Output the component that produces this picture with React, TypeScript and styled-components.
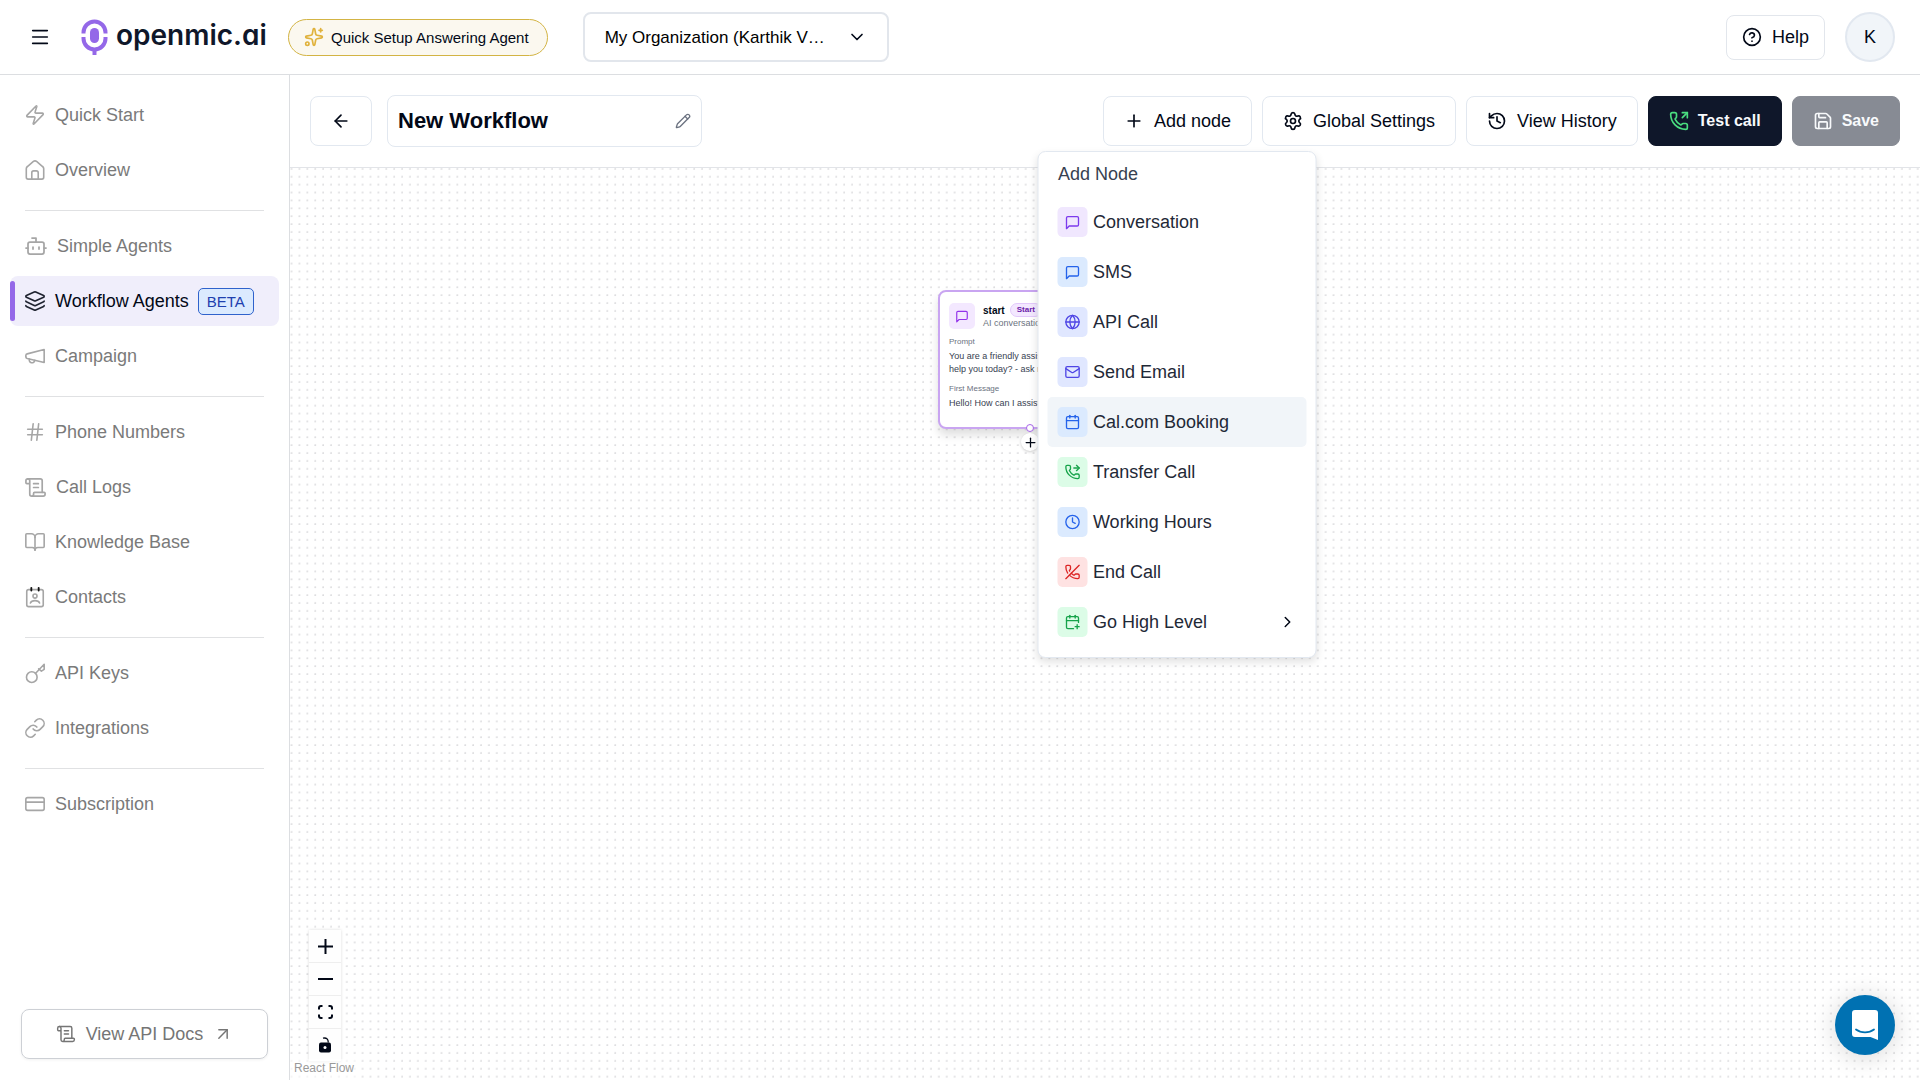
import React from "react";
import styled, { createGlobalStyle } from "styled-components";
import {
  ArrowLeft,
  ArrowUpRight,
  BookOpen,
  Bot,
  Calendar,
  CalendarPlus,
  ChevronDown,
  ChevronRight,
  CircleHelp,
  Clock,
  CreditCard,
  Globe,
  Hash,
  History,
  Layers,
  Link,
  Mail,
  Menu as MenuIcon,
  Pencil,
  PhoneForwarded,
  PhoneOff,
  PhoneOutgoing,
  Plus,
  Save,
  ScrollText,
  Settings,
  Sparkles,
  Zap,
} from "lucide-react";

const GlobalStyle = createGlobalStyle`
  *, *::before, *::after { box-sizing: border-box; }
  body { margin: 0; background: #fff; }
  body, button, input, select {
    font-family: "Liberation Sans", Arial, sans-serif;
    color: #020817;
  }
  button { cursor: pointer; }
  a { text-decoration: none; color: inherit; }
  svg { flex-shrink: 0; }
`;

const Page = styled.div`
  display: flex;
  flex-direction: column;
  height: 100vh;
  overflow: hidden;
`;

/* ---------- top header ---------- */

const Header = styled.header`
  display: flex;
  align-items: center;
  height: 75px;
  padding: 0 25px 0 29px;
  border-bottom: 1px solid #dcdee1;
  flex-shrink: 0;
`;

const IconButton = styled.button`
  display: flex;
  padding: 0;
  border: 0;
  background: none;
`;

const Brand = styled.a`
  display: flex;
  align-items: center;
  gap: 8px;
  margin-left: 30px;
  width: 187px;
`;

const BrandName = styled.span`
  font-family: Inter, "Liberation Sans", sans-serif;
  font-feature-settings: "cv11";
  font-size: 28px;
  line-height: 36px;
  font-weight: 600;
  color: #0f172a;
  padding-bottom: 4px;
`;

const SetupButton = styled.button`
  display: flex;
  align-items: center;
  gap: 7px;
  height: 37px;
  margin-left: 20px;
  padding: 0 18px 0 15px;
  border: 1px solid #d3b444;
  border-radius: 19px;
  background: #fbf8ef;
  font-size: 15px;
  white-space: nowrap;
`;

const OrgPicker = styled.div`
  display: flex;
  align-items: center;
  position: relative;
  width: 306px;
  height: 50px;
  margin-left: 35px;
  svg {
    position: absolute;
    right: 22px;
    pointer-events: none;
  }
`;

const OrgSelect = styled.select`
  appearance: none;
  width: 100%;
  height: 100%;
  padding: 0 54px 0 20px;
  border: 2px solid #e2e6ec;
  border-radius: 8px;
  background: #fff;
  font-size: 17px;
  color: #000;
  text-overflow: ellipsis;
`;

const HeaderEnd = styled.div`
  display: flex;
  align-items: center;
  gap: 20px;
  margin-left: auto;
`;

const HelpButton = styled.button`
  display: flex;
  align-items: center;
  gap: 10px;
  height: 45px;
  padding: 0 15px;
  border: 1px solid #e2e6ec;
  border-radius: 8px;
  background: #fff;
  font-size: 18px;
`;

const Avatar = styled.button`
  width: 50px;
  height: 50px;
  padding: 0;
  border: 2px solid #e2e8f0;
  border-radius: 50%;
  background: #f1f5f9;
  font-size: 18px;
`;

/* ---------- sidebar ---------- */

const Body = styled.div`
  display: flex;
  flex: 1;
  min-height: 0;
`;

const Sidebar = styled.aside`
  display: flex;
  flex-direction: column;
  width: 290px;
  padding: 15px 10px 21px;
  border-right: 1px solid #dcdee1;
  flex-shrink: 0;
`;

const NavGroup = styled.nav`
  display: flex;
  flex-direction: column;
  gap: 5px;
`;

const Divider = styled.hr`
  width: 239px;
  height: 1px;
  margin: 15px 0 10px 15px;
  border: 0;
  background: #e0e1e3;
`;

const NavItem = styled.a<{ $active?: boolean }>`
  display: flex;
  align-items: center;
  gap: 9px;
  position: relative;
  height: 50px;
  padding-left: 14px;
  border-radius: 8px;
  font-size: 18px;
  color: ${(p) => (p.$active ? "#020817" : "#7a7a7a")};
  background: ${(p) => (p.$active ? "#f0eefb" : "transparent")};
  svg {
    color: ${(p) => (p.$active ? "#1f2330" : "#a6a6a6")};
  }
  &::before {
    content: "";
    display: ${(p) => (p.$active ? "block" : "none")};
    position: absolute;
    left: 0;
    top: 5px;
    bottom: 5px;
    width: 5px;
    border-radius: 3px;
    background: #9468e8;
  }
`;

const BetaTag = styled.span`
  padding: 0 8px;
  border: 1px solid #2f62cc;
  border-radius: 5px;
  background: #dbeafe;
  color: #1e40af;
  font-size: 15px;
  line-height: 25px;
`;

const DocsLink = styled.a`
  display: flex;
  align-items: center;
  justify-content: center;
  gap: 10px;
  height: 50px;
  margin: auto 11px 0;
  border: 1px solid #cdd0d5;
  border-radius: 8px;
  box-shadow: 0 1px 3px rgba(0, 0, 0, 0.06);
  color: #757575;
  font-size: 18px;
`;

/* ---------- workflow toolbar ---------- */

const Main = styled.main`
  display: flex;
  flex-direction: column;
  flex: 1;
  min-width: 0;
`;

const Toolbar = styled.div`
  display: flex;
  align-items: center;
  gap: 10px;
  height: 93px;
  padding: 0 20px;
  border-bottom: 1px solid #e2e4e8;
  flex-shrink: 0;
`;

const toolTones = { dark: "#0f172a", muted: "#878b94" };

const ToolButton = styled.button<{ $tone?: keyof typeof toolTones }>`
  display: flex;
  align-items: center;
  justify-content: center;
  gap: ${(p) => (p.$tone ? 9 : 10)}px;
  height: 50px;
  padding: 0 20px;
  border: 1px solid ${(p) => (p.$tone ? toolTones[p.$tone] : "#e2e8f0")};
  border-radius: 8px;
  background: ${(p) => (p.$tone ? toolTones[p.$tone] : "#fff")};
  color: ${(p) => (p.$tone ? "#f8fafc" : "#020817")};
  font-size: ${(p) => (p.$tone ? 16 : 18)}px;
  font-weight: ${(p) => (p.$tone ? 700 : 400)};
  white-space: nowrap;
`;

const BackButton = styled(ToolButton)`
  width: 62px;
  padding: 0;
`;

const TitleField = styled.label`
  display: flex;
  align-items: center;
  width: 315px;
  height: 52px;
  margin: 0 auto 0 5px;
  padding: 0 10px;
  border: 1px solid #e2e8f0;
  border-radius: 8px;
  color: #6b7280;
`;

const TitleInput = styled.input`
  flex: 1;
  min-width: 0;
  padding: 0;
  border: 0;
  outline: 0;
  background: none;
  font-size: 22px;
  font-weight: 700;
`;

const MenuAnchor = styled.div`
  position: relative;
`;

const NodeMenu = styled.div`
  position: absolute;
  z-index: 5;
  top: 100%;
  left: 50%;
  width: 279px;
  margin-top: 5px;
  padding: 0 9px 10px;
  transform: translateX(-50%);
  border: 1px solid #e2e8f0;
  border-radius: 8px;
  background: #fff;
  box-shadow: 0 4px 8px rgba(0, 0, 0, 0.12);
`;

const MenuTitle = styled.div`
  padding: 10px 10px 11px;
  color: #374151;
  font-size: 18px;
  line-height: 24px;
`;

const MenuItem = styled.button<{ $highlighted?: boolean }>`
  display: flex;
  align-items: center;
  gap: 5px;
  width: 100%;
  height: 50px;
  padding: 0 10px;
  border: 0;
  border-radius: 5px;
  background: ${(p) => (p.$highlighted ? "#f1f5f9" : "transparent")};
  color: #1f2937;
  font-size: 18px;
  text-align: left;
  & > svg {
    margin-left: auto;
    color: #020817;
  }
`;

const Tile = styled.span<{ $bg: string; $fg: string; $size: number }>`
  display: flex;
  align-items: center;
  justify-content: center;
  width: ${(p) => p.$size}px;
  height: ${(p) => p.$size}px;
  border-radius: 5px;
  background: ${(p) => p.$bg};
  color: ${(p) => p.$fg};
  flex-shrink: 0;
`;

/* ---------- canvas ---------- */

const Canvas = styled.section`
  position: relative;
  flex: 1;
  min-height: 0;
  overflow: hidden;
`;

const DotGrid = styled.svg`
  display: block;
  width: 100%;
  height: 100%;
`;

const FlowNode = styled.article`
  position: absolute;
  left: 648px;
  top: 122px;
  width: 184px;
  height: 139px;
  padding: 11px 9px;
  border: 2px solid #c9a5f1;
  border-radius: 8px;
  background: #fff;
  box-shadow: 0 6px 10px rgba(0, 0, 0, 0.13);
  font-size: 9px;
  line-height: 13px;
`;

const NodeHead = styled.div`
  display: flex;
  gap: 8px;
`;

const NodeName = styled.div`
  display: flex;
  align-items: center;
  gap: 5px;
  height: 14px;
  font-size: 10px;
  font-weight: 700;
`;

const StartTag = styled.span`
  padding: 0 6px;
  border: 1px solid #e3c9fb;
  border-radius: 7px;
  background: #f3e8ff;
  color: #6b21a8;
  font-size: 8px;
  line-height: 12px;
`;

const NodeKind = styled.div`
  color: #6b7280;
  line-height: 12px;
  white-space: nowrap;
`;

const NodeLabel = styled.div`
  margin-top: 7px;
  margin-bottom: 3px;
  color: #6b7280;
  font-size: 8px;
  line-height: 11px;
`;

const NodeText = styled.div`
  color: #374151;
`;

const Handle = styled.span`
  position: absolute;
  left: 50%;
  bottom: -5px;
  width: 8px;
  height: 8px;
  margin-left: -4px;
  border: 1px solid #a866ea;
  border-radius: 50%;
  background: #fff;
`;

const AppendButton = styled.button`
  display: flex;
  align-items: center;
  justify-content: center;
  position: absolute;
  left: 50%;
  bottom: -24px;
  width: 18px;
  height: 18px;
  margin-left: -9px;
  padding: 0;
  border: 0;
  border-radius: 50%;
  background: #fff;
  box-shadow: 0 1px 3px rgba(0, 0, 0, 0.2);
`;

const Controls = styled.div`
  position: absolute;
  left: 19px;
  bottom: 18px;
  display: flex;
  flex-direction: column;
  width: 32px;
  box-shadow: 0 0 3px rgba(0, 0, 0, 0.14);
`;

const ControlButton = styled.button`
  display: flex;
  align-items: center;
  justify-content: center;
  height: 33px;
  padding: 0;
  border: 0;
  border-bottom: 1px solid #eee;
  background: #fefefe;
`;

const Attribution = styled.a`
  position: absolute;
  left: 0;
  bottom: 0;
  padding: 2px 4px 5px;
  background: rgba(255, 255, 255, 0.6);
  color: #999;
  font-size: 12px;
  line-height: 14px;
`;

const ChatButton = styled.button`
  display: flex;
  align-items: center;
  justify-content: center;
  position: absolute;
  right: 25px;
  bottom: 25px;
  width: 60px;
  height: 60px;
  padding: 0;
  border: 0;
  border-radius: 50%;
  background: #0071b2;
  box-shadow: 0 2px 24px rgba(0, 0, 0, 0.16);
`;

/* ---------- drawings ---------- */

type IconProps = { size?: number; strokeWidth?: number };

const LineIcon = ({ size = 22, strokeWidth = 2, children }: IconProps & { children: React.ReactNode }) => (
  <svg width={size} height={size} viewBox="0 0 24 24" fill="none" stroke="currentColor" strokeWidth={strokeWidth} strokeLinecap="round" strokeLinejoin="round">
    {children}
  </svg>
);

const Message = (p: IconProps) => (
  <LineIcon {...p}>
    <path d="M21 15a2 2 0 0 1-2 2H7l-4 4V5a2 2 0 0 1 2-2h14a2 2 0 0 1 2 2z" transform="translate(0 1)" />
  </LineIcon>
);

const House = (p: IconProps) => (
  <LineIcon {...p}>
    <path d="M2.5 10.5a3 3 0 0 1 1.2-2.3l6.6-5.5a2.7 2.7 0 0 1 3.4 0l6.6 5.5a3 3 0 0 1 1.2 2.3V20a2 2 0 0 1-2 2h-15a2 2 0 0 1-2-2z" />
    <path d="M8.5 22v-7a2 2 0 0 1 2-2h3a2 2 0 0 1 2 2v7" />
  </LineIcon>
);

const Horn = (p: IconProps) => (
  <LineIcon {...p}>
    <path d="M22 5v14L3.500 14.800A2 2 0 0 1 2 13v-1.500A2 2 0 0 1 3.500 9.700z" />
    <path d="M11.700 16.800a3 3 0 1 1-5.800-1.400" />
  </LineIcon>
);

const KeyShape = (p: IconProps) => (
  <LineIcon {...p}>
    <circle cx="8.500" cy="16.500" r="5.800" />
    <path d="M12.700 12.300 22 2.500v5.500l-3 2-3-2.500" />
  </LineIcon>
);

const ContactCard = (p: IconProps) => (
  <LineIcon {...p}>
    <rect x="3" y="4" width="18" height="18.500" rx="2" />
    <circle cx="12" cy="11" r="2.200" />
    <path d="M7 18.500c.8-2 2.600-2.500 5-2.500s4.200.5 5 2.500" />
    <path d="M8 2v3M16 2v3" stroke="#111" strokeWidth="2" />
  </LineIcon>
);

const BrandMark = () => (
  <svg width="27" height="36" viewBox="0 0 27 36" fill="none" stroke="#9468e8">
    <path d="M2.500 14.500v-1a11 11 0 0 1 22 0v1" strokeWidth="4" />
    <path d="M2.500 18v1.500a11 11 0 0 0 22 0v-1.500" strokeWidth="4" />
    <path d="M13.500 29v7" strokeWidth="4" />
    <rect x="9" y="9" width="9" height="15" rx="4.500" fill="#9468e8" stroke="none" />
  </svg>
);

const FitView = () => (
  <svg width="15" height="14" viewBox="0 0 15 14" fill="none" stroke="currentColor" strokeWidth="2">
    <path d="M1 4.500V3a2 2 0 0 1 2-2h1.500M10.500 1H12a2 2 0 0 1 2 2v1.500M14 9.500V11a2 2 0 0 1-2 2h-1.500M4.500 13H3a2 2 0 0 1-2-2V9.500" />
  </svg>
);

const Unlocked = () => (
  <svg width="12" height="16" viewBox="0 0 12 16">
    <path d="M4 1.200c3.500-.8 5.300.8 5.300 4.300" fill="none" stroke="currentColor" strokeWidth="1.300" />
    <rect y="5.500" width="12" height="10" rx="2" fill="currentColor" />
    <circle cx="6" cy="10.500" r="1.500" fill="#fff" />
  </svg>
);

const ChatFace = () => (
  <svg width="26" height="30" viewBox="0 0 26 30">
    <path d="M3 0h20a3 3 0 0 1 3 3v27l-7.500-3H3a3 3 0 0 1-3-3V3a3 3 0 0 1 3-3z" fill="#fff" />
    <path d="M4 19.500c5 3.800 13 3.800 18 0" fill="none" stroke="#0071b2" strokeWidth="1.800" strokeLinecap="round" />
  </svg>
);

const ZoomIn = () => (
  <svg width="15" height="15" viewBox="0 0 15 15" stroke="currentColor" strokeWidth="2">
    <path d="M7.500 0v15M0 7.500h15" />
  </svg>
);

const ZoomOut = () => (
  <svg width="15" height="2" viewBox="0 0 15 2">
    <rect width="15" height="2" fill="currentColor" />
  </svg>
);

/* ---------- data ---------- */

type NavEntry = { label: string; icon: React.ComponentType<any>; size?: number; active?: boolean };

const navGroups: NavEntry[][] = [
  [
    { label: "Quick Start", icon: Zap },
    { label: "Overview", icon: House },
  ],
  [
    { label: "Simple Agents", icon: Bot, size: 24 },
    { label: "Workflow Agents", icon: Layers, active: true },
    { label: "Campaign", icon: Horn },
  ],
  [
    { label: "Phone Numbers", icon: Hash },
    { label: "Call Logs", icon: ScrollText, size: 23 },
    { label: "Knowledge Base", icon: BookOpen },
    { label: "Contacts", icon: ContactCard },
  ],
  [
    { label: "API Keys", icon: KeyShape },
    { label: "Integrations", icon: Link },
  ],
  [{ label: "Subscription", icon: CreditCard }],
];

const tones = {
  purple: ["#f0e7fe", "#7c3aed"],
  blue: ["#dbeafe", "#2563eb"],
  indigo: ["#e0e7ff", "#4f46e5"],
  green: ["#dcfce7", "#16a34a"],
  red: ["#fee2e2", "#dc2626"],
};

const nodeKinds: { label: string; icon: React.ComponentType<any>; tone: keyof typeof tones; more?: boolean }[] = [
  { label: "Conversation", icon: Message, tone: "purple" },
  { label: "SMS", icon: Message, tone: "blue" },
  { label: "API Call", icon: Globe, tone: "indigo" },
  { label: "Send Email", icon: Mail, tone: "indigo" },
  { label: "Cal.com Booking", icon: Calendar, tone: "blue" },
  { label: "Transfer Call", icon: PhoneForwarded, tone: "green" },
  { label: "Working Hours", icon: Clock, tone: "blue" },
  { label: "End Call", icon: PhoneOff, tone: "red" },
  { label: "Go High Level", icon: CalendarPlus, tone: "green", more: true },
];

export default function App() {
  return (
    <Page>
      <GlobalStyle />
      <Header>
        <IconButton aria-label="Toggle menu">
          <MenuIcon size={22} strokeWidth={1.75} />
        </IconButton>
        <Brand href="#">
          <BrandMark />
          <BrandName>openmic.ai</BrandName>
        </Brand>
        <SetupButton>
          <Sparkles size={20} color="#e0b23c" />
          Quick Setup Answering Agent
        </SetupButton>
        <OrgPicker>
          <OrgSelect aria-label="Organization">
            <option>My Organization (Karthik V…</option>
          </OrgSelect>
          <ChevronDown size={20} />
        </OrgPicker>
        <HeaderEnd>
          <HelpButton>
            <CircleHelp size={20} />
            Help
          </HelpButton>
          <Avatar>K</Avatar>
        </HeaderEnd>
      </Header>

      <Body>
        <Sidebar>
          {navGroups.map((group, i) => (
            <React.Fragment key={i}>
              {i > 0 && <Divider />}
              <NavGroup>
                {group.map(({ label, icon: Icon, size = 22, active }) => (
                  <NavItem href="#" key={label} $active={active}>
                    <Icon size={size} strokeWidth={1.75} />
                    {label}
                    {active && <BetaTag>BETA</BetaTag>}
                  </NavItem>
                ))}
              </NavGroup>
            </React.Fragment>
          ))}
          <DocsLink href="#">
            <ScrollText size={20} strokeWidth={1.75} />
            View API Docs
            <ArrowUpRight size={20} strokeWidth={1.75} />
          </DocsLink>
        </Sidebar>

        <Main>
          <Toolbar>
            <BackButton aria-label="Back">
              <ArrowLeft size={20} />
            </BackButton>
            <TitleField>
              <TitleInput aria-label="Workflow name" defaultValue="New Workflow" />
              <Pencil size={16} />
            </TitleField>
            <MenuAnchor>
              <ToolButton>
                <Plus size={20} />
                Add node
              </ToolButton>
              <NodeMenu>
                <MenuTitle>Add Node</MenuTitle>
                {nodeKinds.map(({ label, icon: Icon, tone, more }) => (
                  <MenuItem key={label} $highlighted={label === "Cal.com Booking"}>
                    <Tile $size={30} $bg={tones[tone][0]} $fg={tones[tone][1]}>
                      <Icon size={16} strokeWidth={2} />
                    </Tile>
                    {label}
                    {more && <ChevronRight size={18} />}
                  </MenuItem>
                ))}
              </NodeMenu>
            </MenuAnchor>
            <ToolButton>
              <Settings size={20} />
              Global Settings
            </ToolButton>
            <ToolButton>
              <History size={20} />
              View History
            </ToolButton>
            <ToolButton $tone="dark">
              <PhoneOutgoing size={20} color="#4ade80" />
              Test call
            </ToolButton>
            <ToolButton $tone="muted">
              <Save size={20} />
              Save
            </ToolButton>
          </Toolbar>

          <Canvas>
            <DotGrid aria-hidden="true">
              <defs>
                <pattern id="dots" width="7.894" height="7.894" x="-2.500" y="-3.200" patternUnits="userSpaceOnUse">
                  <circle cx="4" cy="4" r="0.500" fill="#75757e" />
                </pattern>
              </defs>
              <rect width="100%" height="100%" fill="url(#dots)" />
            </DotGrid>

            <FlowNode>
              <NodeHead>
                <Tile $size={26} $bg="#f3e8ff" $fg="#9333ea">
                  <Message size={14} />
                </Tile>
                <div>
                  <NodeName>
                    start <StartTag>Start</StartTag>
                  </NodeName>
                  <NodeKind>AI conversation node</NodeKind>
                </div>
              </NodeHead>
              <NodeLabel>Prompt</NodeLabel>
              <NodeText>
                You are a friendly assistant. How can I
                <br />
                help you today? - ask relevant
              </NodeText>
              <NodeLabel>First Message</NodeLabel>
              <NodeText>Hello! How can I assist you?</NodeText>
              <Handle />
              <AppendButton aria-label="Append node">
                <Plus size={15} />
              </AppendButton>
            </FlowNode>

            <Controls>
              <ControlButton aria-label="Zoom in">
                <ZoomIn />
              </ControlButton>
              <ControlButton aria-label="Zoom out">
                <ZoomOut />
              </ControlButton>
              <ControlButton aria-label="Fit view">
                <FitView />
              </ControlButton>
              <ControlButton aria-label="Toggle interactivity">
                <Unlocked />
              </ControlButton>
            </Controls>
            <Attribution href="#">React Flow</Attribution>
            <ChatButton aria-label="Open chat">
              <ChatFace />
            </ChatButton>
          </Canvas>
        </Main>
      </Body>
    </Page>
  );
}
